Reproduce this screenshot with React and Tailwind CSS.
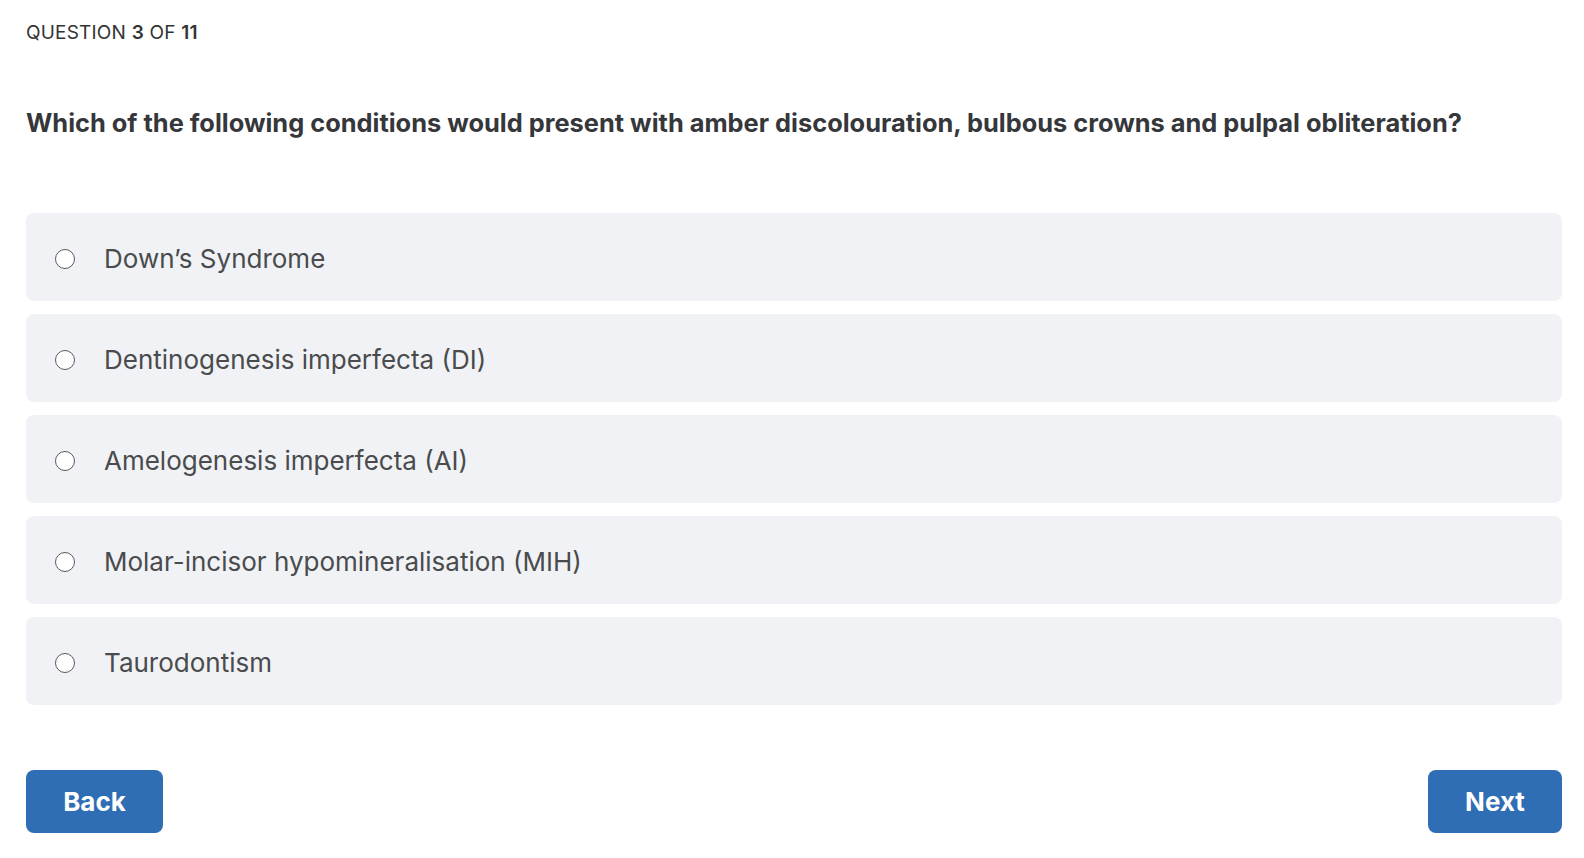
import { useState } from "react";

const options = [
  "Down’s Syndrome",
  "Dentinogenesis imperfecta (DI)",
  "Amelogenesis imperfecta (AI)",
  "Molar-incisor hypomineralisation (MIH)",
  "Taurodontism",
];

const App = () => {
  const [selected, setSelected] = useState(null);

  return (
    <main
      className="w-full min-h-screen bg-white pl-[26px] pr-[22px] pt-[21px] text-[#333]"
      style={{ fontFamily: "Inter, 'Noto Sans', sans-serif" }}
    >
      <p className="text-[19px] leading-[24px] text-[#333] tracking-[0.2px]">
        QUESTION <span className="font-semibold">3</span> OF{" "}
        <span className="font-semibold">11</span>
      </p>
      <h2 className="mt-[62px] text-[25.4px] leading-[32px] font-bold text-[#35373b]">
        Which of the following conditions would present with amber
        discolouration, bulbous crowns and pulpal obliteration?
      </h2>

      <div className="mt-[74px] flex flex-col gap-[13px]">
        {options.map((opt, i) => (
          <label
            key={opt}
            className="flex items-center h-[88px] rounded-[8px] bg-[#f0f2f5] pl-[29px] pt-[4px] cursor-pointer"
          >
            <input
              type="radio"
              name="answer"
              checked={selected === i}
              onChange={() => setSelected(i)}
              className="appearance-none w-[20px] h-[20px] rounded-full border-[1.5px] border-[#5a5a5a] bg-white checked:border-[6px] checked:border-[#2f6db4]"
            />
            <span className="ml-[29px] -mt-[1px] text-[26px] leading-[34px] text-[#4a4b4d]">
              {opt}
            </span>
          </label>
        ))}
      </div>

      <div className="mt-[65px] flex justify-between">
        <button className="w-[137px] h-[63px] rounded-[8px] bg-[#2f6db4] text-white text-[26px] font-bold">
          Back
        </button>
        <button className="w-[134px] h-[63px] rounded-[8px] bg-[#2f6db4] text-white text-[26px] font-bold">
          Next
        </button>
      </div>
    </main>
  );
};

export default App;
